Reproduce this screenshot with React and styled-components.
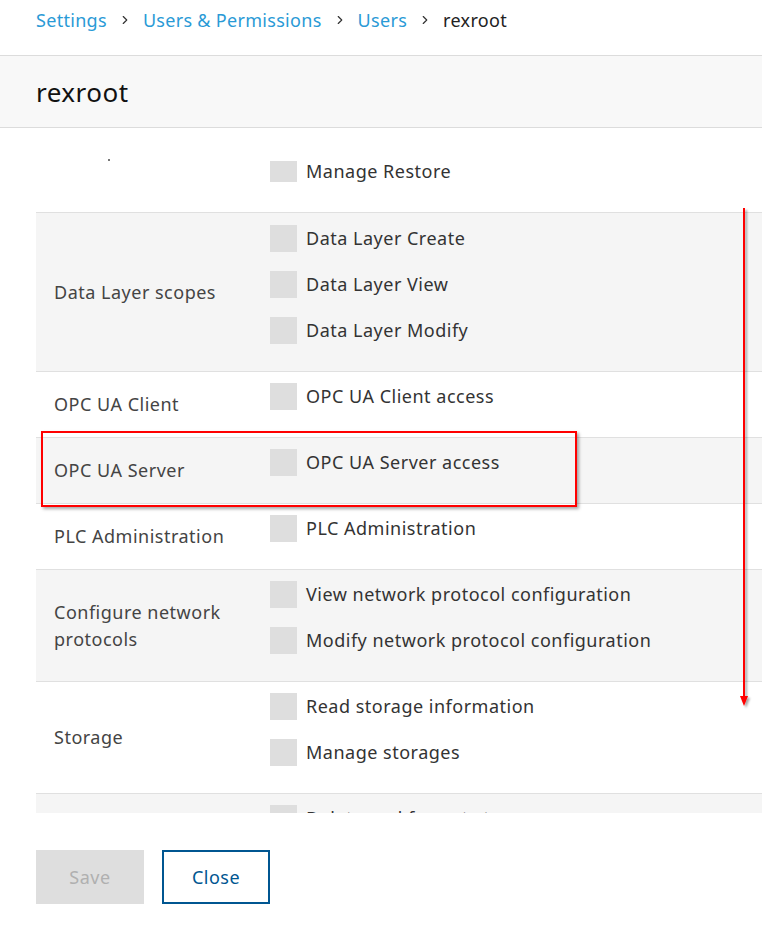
import React from "react";
import styled, { createGlobalStyle } from "styled-components";
import { ChevronRight } from "lucide-react";

const GlobalStyle = createGlobalStyle`
  body {
    margin: 0;
    background: #fff;
    font-family: "Noto Sans", "Open Sans", sans-serif;
    letter-spacing: 0.5px;
    color: #333;
  }
`;

const Page = styled.div`
  position: relative;
  width: 762px;
  height: 934px;
  overflow: hidden;
`;

const Breadcrumb = styled.nav`
  display: flex;
  align-items: center;
  gap: 11px;
  height: 55px;
  padding: 0 36px 16px;
  box-sizing: border-box;
  font-size: 18px;
  letter-spacing: 0.3px;
`;

const Crumb = styled.span`
  color: ${(p) => (p.$current ? "#222" : "#2a9ad6")};
`;

const Sep = styled(ChevronRight)`
  color: #333;
  margin-top: 1px;
`;

const TitleBar = styled.header`
  background: #f8f8f8;
  border-top: 1px solid #dcdcdc;
  border-bottom: 1px solid #dcdcdc;
  height: 71px;
  display: flex;
  align-items: center;
  padding: 0 36px;
  font-size: 26px;
  color: #111;
`;

const Scroller = styled.div`
  height: 685px;
  overflow: hidden;
  margin-left: 36px;
`;

const Row = styled.div`
  display: grid;
  grid-template-columns: 234px 1fr;
  background: ${(p) => (p.$shaded ? "#f5f5f5" : "#fff")};
  border-top: ${(p) => (p.$first ? "none" : "1px solid #e0e0e0")};
`;

const Label = styled.div`
  display: flex;
  align-items: center;
  padding: 0 40px 0 18px;
  font-size: 18px;
  line-height: 27px;
  color: #444;
`;

const Dot = styled.div`
  align-self: flex-start;
  margin-top: 31px;
  margin-left: 54px;
  width: 2px;
  height: 2px;
  background: #777;
`;

const Items = styled.div`
  display: flex;
  flex-direction: column;
  gap: 19px;
  padding: ${(p) => p.$pad || "11px 0 27px"};
`;

const Item = styled.label`
  display: flex;
  align-items: center;
  gap: 9px;
  font-size: 18px;
  line-height: 27px;
  color: #333;
  white-space: nowrap;
`;

const Box = styled.span`
  width: 27px;
  height: ${(p) => p.$h || 27}px;
  background: #dedede;
  flex-shrink: 0;
`;

const Footer = styled.div`
  display: flex;
  gap: 18px;
  padding: 37px 36px 0;
`;

const Button = styled.button`
  width: 108px;
  height: 54px;
  font-family: inherit;
  letter-spacing: 0.5px;
  font-size: 18px;
  background: ${(p) => (p.$primary ? "#dedede" : "#fff")};
  color: ${(p) => (p.$primary ? "#b0b0b0" : "#005691")};
  border: ${(p) => (p.$primary ? "none" : "2px solid #005691")};
  padding: 0;
`;

const Highlight = styled.div`
  position: absolute;
  left: 41px;
  top: 431px;
  width: 536px;
  height: 76px;
  box-sizing: border-box;
  border: 2px solid #f00;
  box-shadow: 2px 2px 3px rgba(0, 0, 0, 0.35);
`;

const Arrow = styled.svg`
  position: absolute;
  left: 738px;
  top: 206px;
`;

const rows = [
  { label: "Data Layer scopes", items: ["Data Layer Create", "Data Layer View", "Data Layer Modify"] },
  { label: "OPC UA Client", items: ["OPC UA Client access"] },
  { label: "OPC UA Server", items: ["OPC UA Server access"] },
  { label: "PLC Administration", items: ["PLC Administration"] },
  {
    label: "Configure network protocols",
    items: ["View network protocol configuration", "Modify network protocol configuration"],
  },
  { label: "Storage", items: ["Read storage information", "Manage storages"] },
  { label: "", items: ["Delete and format storages", "Manage backups"] },
];

const crumbs = ["Settings", "Users & Permissions", "Users"];

export default function App() {
  return (
    <Page>
      <GlobalStyle />
      <Breadcrumb>
        {crumbs.map((c) => (
          <React.Fragment key={c}>
            <Crumb>{c}</Crumb>
            <Sep size={14} strokeWidth={2} />
          </React.Fragment>
        ))}
        <Crumb $current>rexroot</Crumb>
      </Breadcrumb>
      <TitleBar>rexroot</TitleBar>
      <Scroller>
        <Row $first>
          <Label style={{ padding: "0 0 0 18px" }}>
            <Dot />
          </Label>
          <Items $pad="30px 0 27px">
            <Item>
              <Box $h={21} />
              Manage Restore
            </Item>
          </Items>
        </Row>
        {rows.map((r, i) => (
          <Row key={i} $shaded={i % 2 === 0}>
            <Label>{r.label}</Label>
            <Items $pad={i === 0 ? "12px 0 27px" : undefined}>
              {r.items.map((it) => (
                <Item key={it}>
                  <Box />
                  {it}
                </Item>
              ))}
            </Items>
          </Row>
        ))}
      </Scroller>
      <Footer>
        <Button $primary disabled>
          Save
        </Button>
        <Button>Close</Button>
      </Footer>
      <Highlight />
      <Arrow width="14" height="506" viewBox="0 0 14 506">
        <defs>
          <filter id="sh" x="-50%" y="-5%" width="200%" height="110%">
            <feDropShadow dx="2" dy="2" stdDeviation="1" floodColor="#000" floodOpacity="0.35" />
          </filter>
        </defs>
        <g filter="url(#sh)">
          <line x1="6" y1="2" x2="6" y2="492" stroke="#f00" strokeWidth="2" />
          <polygon points="2,490 10,490 6,500" fill="#f00" />
        </g>
      </Arrow>
    </Page>
  );
}
